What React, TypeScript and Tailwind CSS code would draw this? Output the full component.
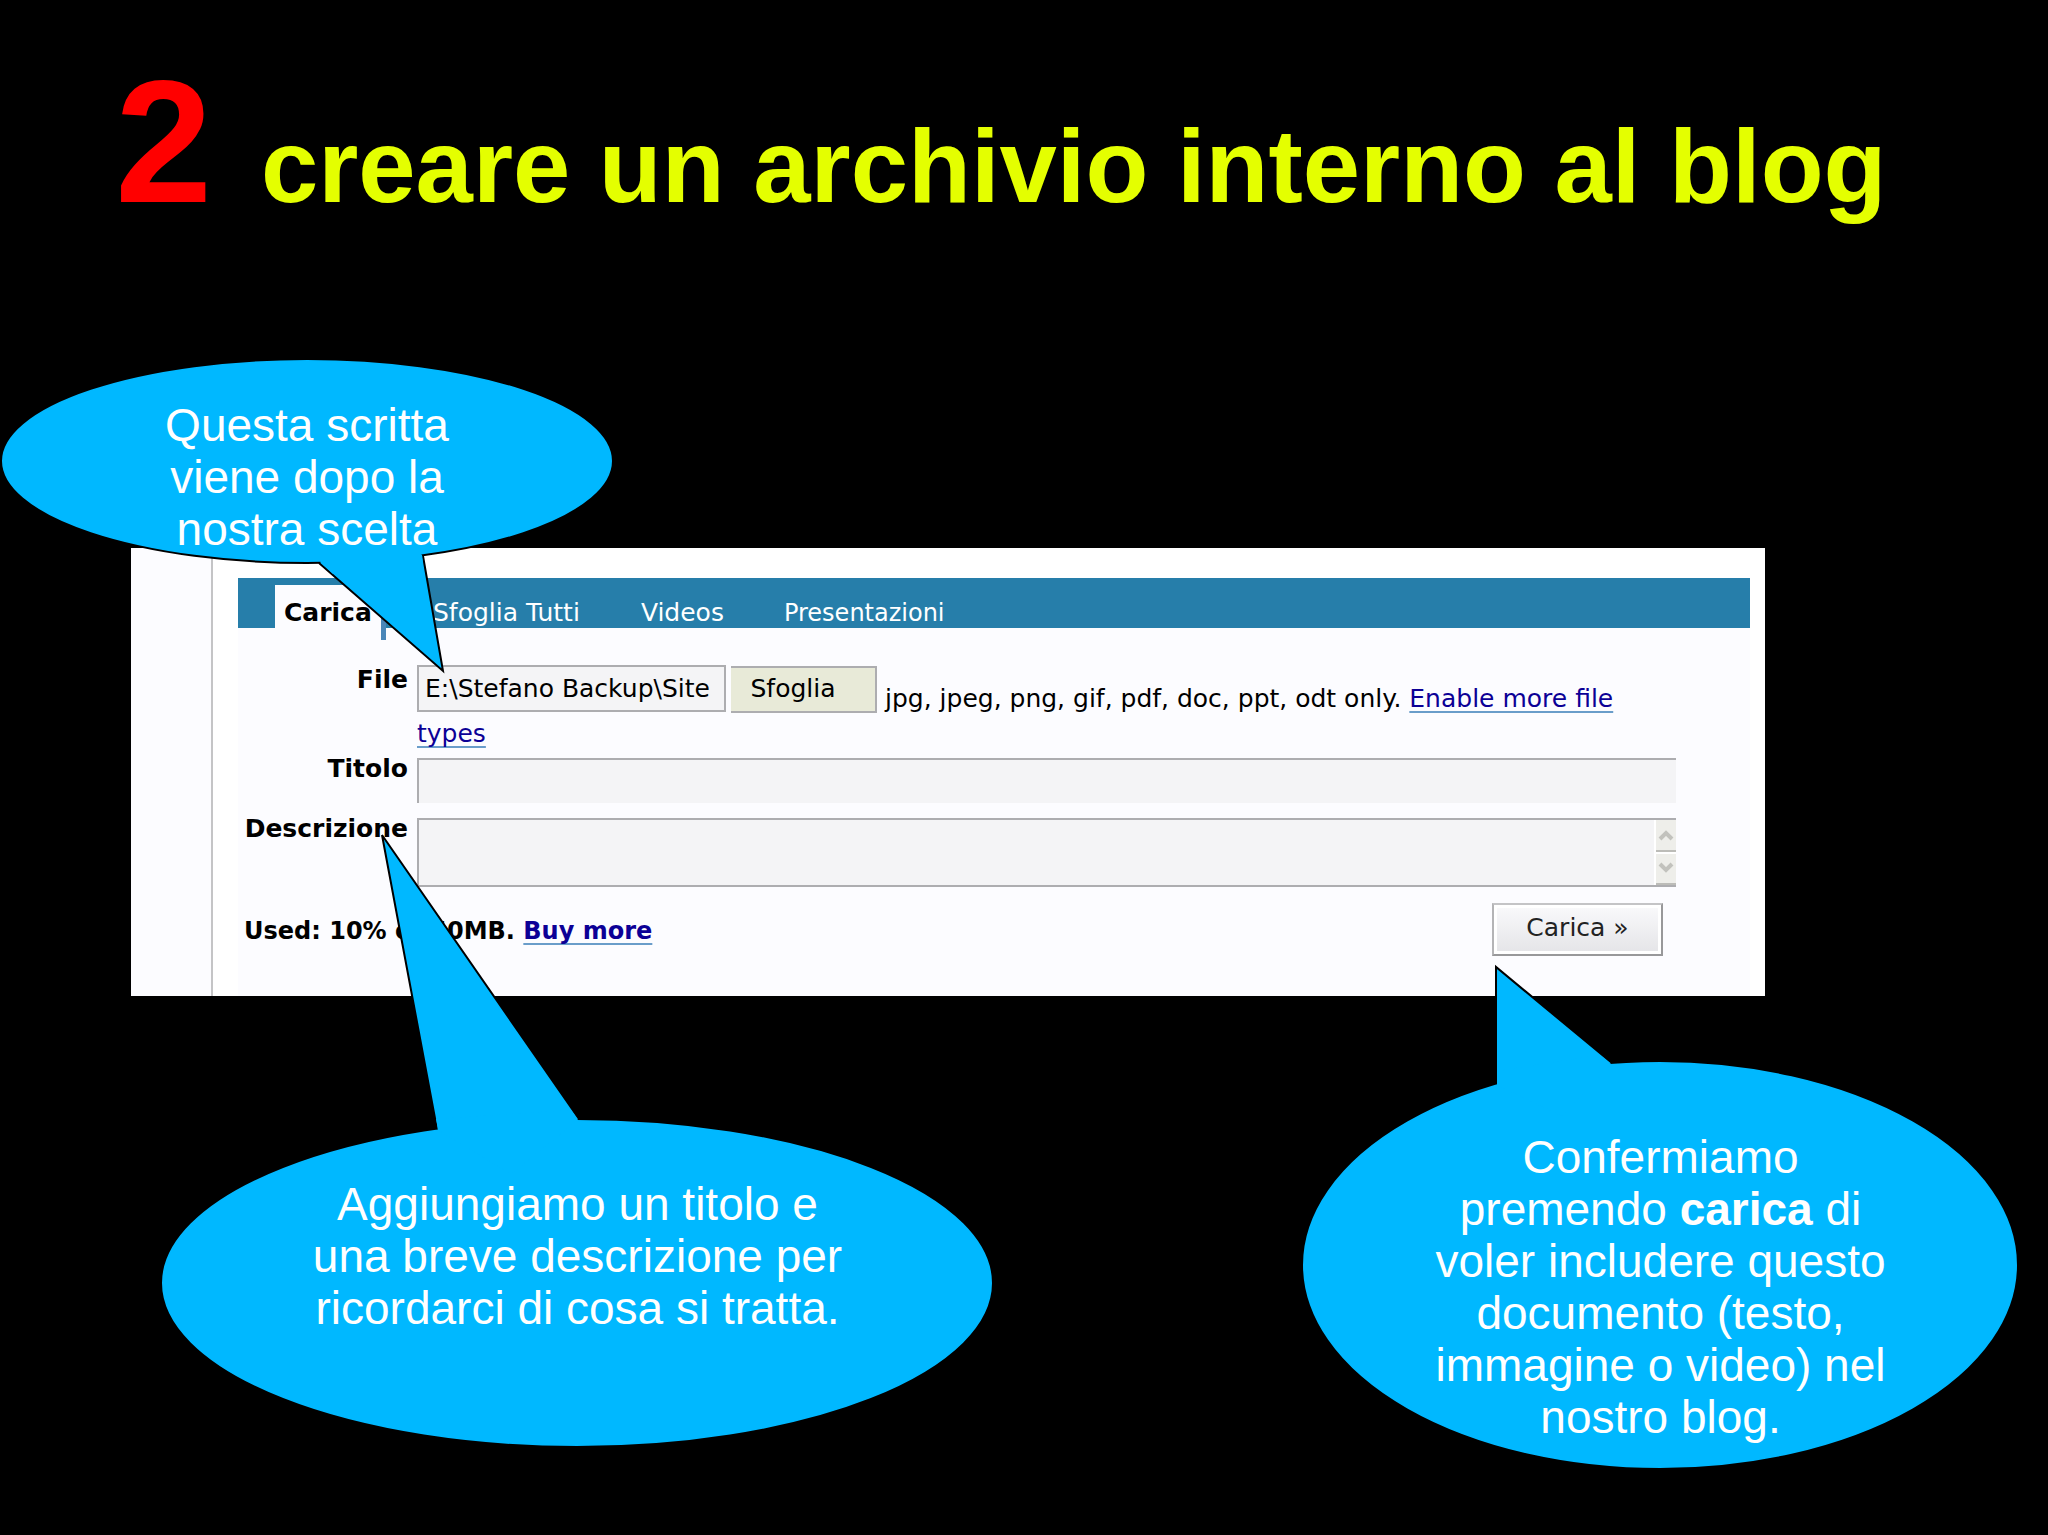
import type { ReactNode } from "react";

type CalloutProps = {
  className: string;
  viewBox: string;
  ellipse: { cx: number; cy: number; rx: number; ry: number };
  tail: string;
  join: string;
  textClassName: string;
  children: ReactNode;
};

function Callout({
  className,
  viewBox,
  ellipse,
  tail,
  join,
  textClassName,
  children,
}: CalloutProps) {
  return (
    <aside className={`absolute ${className}`}>
      <svg
        className="absolute inset-0 h-full w-full overflow-visible"
        viewBox={viewBox}
        fill="#00b8ff"
        stroke="#000"
        strokeWidth="2"
        aria-hidden="true"
      >
        <ellipse {...ellipse} />
        <path d={tail} />
        <path d={join} stroke="none" />
      </svg>
      <p
        className={`relative text-center text-[46px] leading-[52px] text-white ${textClassName}`}
      >
        {children}
      </p>
    </aside>
  );
}

const linkClass =
  "text-[#0c0096] underline decoration-[#6a9dca] decoration-2 underline-offset-4 [text-decoration-skip-ink:none]";

const labelClass = "text-right font-bold leading-[30px]";

function TabBar() {
  return (
    <nav className="flex h-[50px] items-start bg-[#267eaa] pl-[37px] text-white">
      <a
        href="#carica"
        className="mt-[7px] mr-4 h-[55px] w-[111px] border-r-[5px] border-[#4a86b8] bg-[#fcfcff] pt-[13px] pl-[9px] font-bold leading-[30px] text-black"
      >
        Carica
      </a>
      <a href="#sfoglia" className="px-[31px] pt-5 leading-[30px]">
        Sfoglia Tutti
      </a>
      <a href="#videos" className="px-[30px] pt-5 leading-[30px]">
        Videos
      </a>
      <a href="#presentazioni" className="px-[30px] pt-5 text-2xl leading-[30px]">
        Presentazioni
      </a>
    </nav>
  );
}

function ScrollButton({ label, d }: { label: string; d: string }) {
  return (
    <button
      type="button"
      aria-label={label}
      className="flex flex-1 items-center justify-center border-b-2 border-[#bcbcb8] bg-[#eeeeea]"
    >
      <svg className="h-3 w-4" viewBox="0 0 16 12" fill="none" stroke="#c2c2bd" strokeWidth="4">
        <path d={d} />
      </svg>
    </button>
  );
}

function UploadForm() {
  return (
    <form className="pr-[74px] pb-10" onSubmit={(e) => e.preventDefault()}>
      <div className="grid grid-cols-[170px_1fr] gap-x-[9px] pt-[37px]">
        <label htmlFor="file" className={labelClass}>
          File
        </label>
        <div className="mr-10 pb-[3px] leading-[35px]">
          <input
            id="file"
            type="text"
            defaultValue="E:\Stefano Backup\Site"
            className="h-[47px] w-[309px] border-2 border-[#adadb0] bg-[#f4f4f6] pl-1.5 text-[25px] align-[10px] outline-none"
          />
          <button
            type="button"
            className="ml-[5px] h-[47px] w-[146px] border-2 border-l-0 border-[#adadb0] bg-[#e8ead8] pr-5 align-[10px] leading-[30px]"
          >
            Sfoglia
          </button>
          <span className="ml-2">jpg, jpeg, png, gif, pdf, doc, ppt, odt only. </span>
          <a href="#types" className={linkClass}>
            Enable more file types
          </a>
        </div>

        <label htmlFor="titolo" className={labelClass}>
          Titolo
        </label>
        <input
          id="titolo"
          type="text"
          className="mt-1 h-[45px] w-full border-t-2 border-l-2 border-[#adadb0] bg-[#f4f4f6] px-2 outline-none"
        />

        <label htmlFor="descrizione" className={`mt-[11px] ${labelClass}`}>
          Descrizione
        </label>
        <div className="mt-[15px] flex h-[69px] border-2 border-r-0 border-[#adadb0] bg-[#f4f4f6]">
          <textarea
            id="descrizione"
            className="h-full flex-1 resize-none overflow-hidden bg-transparent px-2 outline-none"
          />
          <div className="flex w-[22px] flex-col gap-0.5 border-l-2 border-white bg-white">
            <ScrollButton label="Scorri su" d="M2 10 8 4l6 6" />
            <ScrollButton label="Scorri giù" d="M2 2l6 6 6-6" />
          </div>
        </div>
      </div>

      <div className="mt-4 flex items-start justify-between pr-[13px] pl-1.5">
        <p className="mt-[13px] text-2xl leading-[30px] font-bold">
          Used: 10% of 50MB.{" "}
          <a href="#buy" className={linkClass}>
            Buy more
          </a>
        </p>
        <button
          type="submit"
          className="h-[53px] w-[171px] border-2 border-t-[#c4c4c6] border-r-[#98989a] border-b-[#98989a] border-l-[#b4b4b6] bg-linear-to-b from-[#fafafc] to-[#e4e4e7] pb-1 leading-[30px] text-[#222] shadow-[inset_0_0_0_3px_#fff]"
        >
          Carica »
        </button>
      </div>
    </form>
  );
}

export default function App() {
  return (
    <main className="min-h-screen overflow-hidden bg-black pb-[540px] font-['Liberation_Sans',Arial,sans-serif]">
      <h1 className="pt-[42px] pl-[115px] text-[103px] leading-[200px] font-bold whitespace-nowrap text-[#e4ff00]">
        <span className="text-[175px] text-[#ff0000]">2 </span>
        creare un archivio interno al blog
      </h1>

      <div className="relative mt-[281px] mr-[283px] ml-[131px]">
        <section className="flex bg-white font-['DejaVu_Sans',Verdana,sans-serif] text-[25px] text-black">
          <div className="w-[82px] border-r-2 border-[#c4c4c6] bg-[#fcfcff]" />
          <div className="flex-1 pt-[30px] pr-[15px] pl-[25px]">
            <div className="bg-[#fcfcff]">
              <TabBar />
              <UploadForm />
            </div>
          </div>
        </section>

        <Callout
          className="top-[-190px] left-[-131px] h-[314px] w-[614px]"
          viewBox="0 0 614 314"
          ellipse={{ cx: 307, cy: 103, rx: 306, ry: 102 }}
          tail="M319 205 L443 313 L423 198"
          join="M320 204 L333 216 L423 207 L422 197 L370 150 Z"
          textClassName="pt-[41px]"
        >
          Questa scritta
          <br />
          viene dopo la
          <br />
          nostra scelta
        </Callout>

        <Callout
          className="top-[286px] left-[30px] h-[613px] w-[833px]"
          viewBox="0 0 833 613"
          ellipse={{ cx: 416, cy: 449, rx: 416, ry: 164 }}
          tail="M276 295 L221 1 L418 285"
          join="M277 296 L275 285 L410 276 L417 286 L350 340 Z"
          textClassName="pt-[344px]"
        >
          Aggiungiamo un titolo e
          <br />
          una breve descrizione per
          <br />
          ricordarci di cosa si tratta.
        </Callout>

        <Callout
          className="top-[418px] right-[-254px] h-[504px] w-[717px]"
          viewBox="0 0 717 504"
          ellipse={{ cx: 358, cy: 299, rx: 358, ry: 204 }}
          tail="M194 118 L194 1 L310 97"
          join="M195 119 L195 105 L298 89 L309 98 L260 150 Z"
          textClassName="pt-[165px]"
        >
          Confermiamo
          <br />
          premendo <b>carica</b> di
          <br />
          voler includere questo
          <br />
          documento (testo,
          <br />
          immagine o video) nel
          <br />
          nostro blog.
        </Callout>
      </div>
    </main>
  );
}
